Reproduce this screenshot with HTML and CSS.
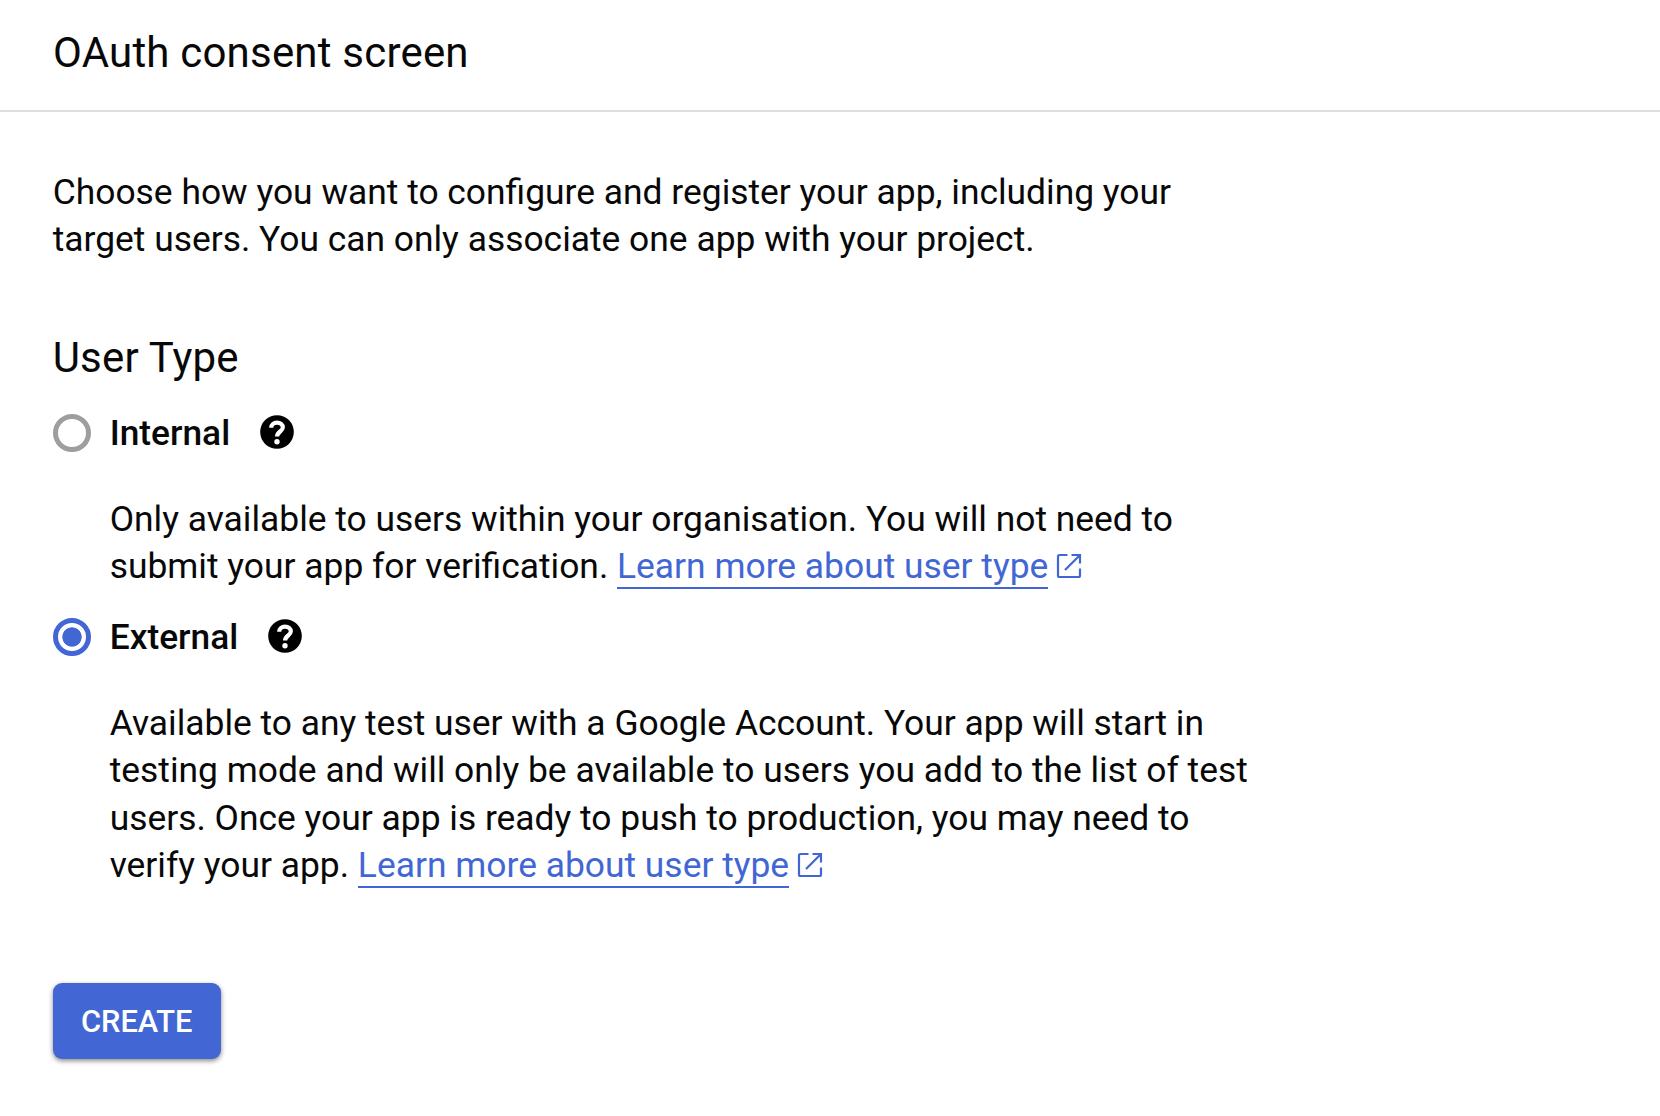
FILE: index.html
```html
<!DOCTYPE html>
<html lang="en">
<head>
<meta charset="utf-8">
<title>OAuth consent screen</title>
<link rel="stylesheet" href="styles.css">
</head>
<body>
<header class="header"><h1 class="title">OAuth consent screen</h1></header>
<main class="content">
  <p class="text intro">Choose how you want to configure and register your app, including your<br>target users. You can only associate one app with your project.</p>
  <h2 class="title section-title">User Type</h2>
  <div class="option">
    <span class="radio"></span><span class="label">Internal</span>
    <svg class="help" viewBox="0 0 34 34"><circle cx="17" cy="17" r="16.800"/><path class="mark" d="M11.200 12.800C11.200 9.500 13.700 7.700 17 7.700s5.800 1.700 5.800 4.900c0 3.800-5.700 4.100-5.700 8.800"/><circle class="dot" cx="17" cy="26.700" r="2.700"/></svg>
  </div>
  <p class="text description">Only available to users within your organisation. You will not need to<br>submit your app for verification. <a class="link">Learn more about user type</a><svg class="launch" viewBox="0 0 24 24"><path d="M10.500 1H2.500Q1 1 1 2.500v19Q1 23 2.500 23h19q1.500 0 1.500-1.500v-7M14.500 1H23v8.500M22.500 1.500 8 16"/></svg></p>
  <div class="option external">
    <span class="radio checked"></span><span class="label">External</span>
    <svg class="help" viewBox="0 0 34 34"><circle cx="17" cy="17" r="16.800"/><path class="mark" d="M11.200 12.800C11.200 9.500 13.700 7.700 17 7.700s5.800 1.700 5.800 4.900c0 3.800-5.700 4.100-5.700 8.800"/><circle class="dot" cx="17" cy="26.700" r="2.700"/></svg>
  </div>
  <p class="text description">Available to any test user with a Google Account. Your app will start in<br>testing mode and will only be available to users you add to the list of test<br>users. Once your app is ready to push to production, you may need to<br>verify your app. <a class="link">Learn more about user type</a><svg class="launch" viewBox="0 0 24 24"><path d="M10.500 1H2.500Q1 1 1 2.500v19Q1 23 2.500 23h19q1.500 0 1.500-1.500v-7M14.500 1H23v8.500M22.500 1.500 8 16"/></svg></p>
  <button class="create">CREATE</button>
</main>
</body>
</html>
```
FILE: styles.css
```css
* { box-sizing: border-box; }
body { margin: 0; background: #fff; color: #080808; font-family: Roboto, sans-serif; }
.header { height: 112px; padding: 29px 53px; border-bottom: 2px solid #dedede; }
.title { margin: 0; font-size: 42px; line-height: 48px; font-weight: 400; letter-spacing: .2px; }
.content { padding: 57px 52.700px; }
.text { margin: 0; font-size: 35.400px; line-height: 47.200px; white-space: nowrap; }
.section-title { margin-top: 70.200px; }
.option { display: flex; align-items: center; height: 48px; margin-top: 27.400px; }
.external { margin-top: 22.700px; }
.radio { width: 38px; height: 38px; border: 5px solid #9e9e9e; border-radius: 50%; }
.checked { border-color: #4267d4; background: radial-gradient(circle, #4267d4 9.300px, #fff 10px); }
.label { margin-left: 19px; font-size: 35.300px; font-weight: 500; }
.help { width: 34px; height: 34px; margin: 0 0 2px 30px; fill: #000; }
.mark { fill: none; stroke: #fff; stroke-width: 4.200px; }
.dot { fill: #fff; }
.description { margin: 39.100px 0 0 57px; }
.link { color: #4267d4; border-bottom: 2px solid #4267d4; }
.launch { width: 24px; height: 24px; margin-left: 8.500px; fill: none; stroke: #4267d4; stroke-width: 2.200px; overflow: visible; }
.create { display: block; width: 168px; height: 76px; margin-top: 94px; padding: 0; border: 0; border-radius: 9px; background: #4267d4; color: #fff; font: 500 30.800px Roboto, sans-serif; box-shadow: 0 2px 5px #0007; }
```
